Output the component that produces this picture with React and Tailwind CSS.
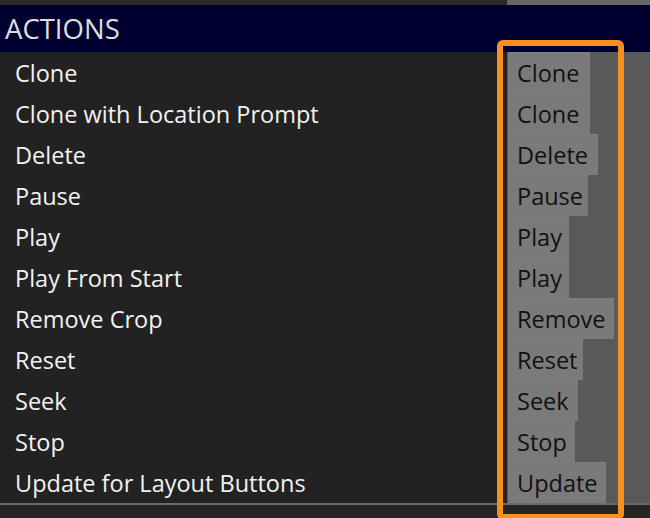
import React from "react";

const rows = [
  ["Clone", "Clone", 82],
  ["Clone with Location Prompt", "Clone", 82],
  ["Delete", "Delete", 90],
  ["Pause", "Pause", 80],
  ["Play", "Play", 61],
  ["Play From Start", "Play", 61],
  ["Remove Crop", "Remove", 106],
  ["Reset", "Reset", 75],
  ["Seek", "Seek", 70],
  ["Stop", "Stop", 67],
  ["Update for Layout Buttons", "Update", 98],
];

export default function App() {
  return (
    <div
      className="relative w-[650px] h-[518px] overflow-hidden bg-[#262626]"
      style={{ fontFamily: "'Open Sans', 'Noto Sans', sans-serif" }}
    >
      <div className="flex h-[5px]">
        <div className="flex-1 bg-[#2b2b2b]" />
        <div className="w-[143px] bg-[#676767]" />
      </div>
      <div className="h-[47px] bg-[#000030] flex items-center pl-[5px] pt-px">
        <span className="text-[27.5px] leading-none text-[#dedede]">ACTIONS</span>
      </div>
      <div className="flex h-[451px]">
        <div className="flex-1 bg-[#222222] flex flex-col">
          {rows.map(([label]) => (
            <div key={label} className="h-[41px] flex items-center pl-[15px] pt-[2px] text-[23.5px] leading-none text-[#f2f2f2]">
              {label}
            </div>
          ))}
        </div>
        <div className="w-[143px] bg-[#595959] pl-px flex flex-col">
          {rows.map(([label, btn, w]) => (
            <div
              key={label}
              className="h-[41px] flex items-center pl-[9px] pt-px text-[23.5px] leading-none text-[#111111] bg-[#7a7a7a] border-t border-[#7f7f7f]"
              style={{ width: w }}
            >
              {btn}
            </div>
          ))}
        </div>
      </div>
      <div className="h-[2px] bg-[#6a6a6a]" />
      <div className="h-[13px] bg-[#262626]" />
      <div className="absolute left-[497px] top-[40px] w-[127px] h-[480px] border-[6px] border-[#f7901e] rounded-[6px]" />
    </div>
  );
}
